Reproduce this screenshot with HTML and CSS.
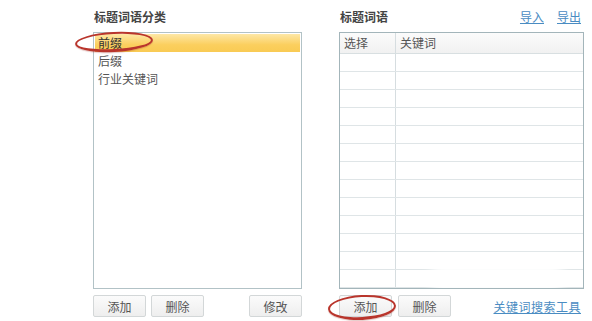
FILE: index.html
```html
<!DOCTYPE html>
<html lang="zh">
<head>
<meta charset="utf-8">
<link rel="stylesheet" href="styles.css">
</head>
<body>
<div class="page">
  <div class="col left">
    <div class="head"><span class="title">标题词语分类</span></div>
    <div class="listbox">
      <div class="item selected">前缀</div>
      <div class="item">后缀</div>
      <div class="item">行业关键词</div>
    </div>
    <div class="btnrow">
      <button class="btn">添加</button>
      <button class="btn">删除</button>
      <span class="spacer"></span>
      <button class="btn">修改</button>
    </div>
    <span class="mark mark-left"></span>
  </div>
  <div class="col right">
    <div class="head">
      <span class="title">标题词语</span>
      <span class="links"><a class="lnk">导入</a><a class="lnk">导出</a></span>
    </div>
    <div class="table">
      <div class="row hdr"><div class="c1">选择</div><div class="c2">关键词</div></div>
      <div class="row"><div class="c1"></div><div class="c2"></div></div>
      <div class="row"><div class="c1"></div><div class="c2"></div></div>
      <div class="row"><div class="c1"></div><div class="c2"></div></div>
      <div class="row"><div class="c1"></div><div class="c2"></div></div>
      <div class="row"><div class="c1"></div><div class="c2"></div></div>
      <div class="row"><div class="c1"></div><div class="c2"></div></div>
      <div class="row"><div class="c1"></div><div class="c2"></div></div>
      <div class="row"><div class="c1"></div><div class="c2"></div></div>
      <div class="row"><div class="c1"></div><div class="c2"></div></div>
      <div class="row"><div class="c1"></div><div class="c2"></div></div>
      <div class="row"><div class="c1"></div><div class="c2"></div></div>
      <div class="row"><div class="c1"></div><div class="c2"></div></div>
      <div class="row"><div class="c1"></div><div class="c2"></div></div>
      <span class="smudge"></span>
    </div>
    <div class="btnrow">
      <button class="btn">添加</button>
      <button class="btn">删除</button>
      <span class="spacer"></span>
      <a class="lnk tool">关键词搜索工具</a>
    </div>
    <span class="mark mark-right"></span>
  </div>
</div>
</body>
</html>
```

FILE: styles.css
```css
* { box-sizing: border-box; }
html, body {
  margin: 0;
  padding: 0;
  background: #fff;
}
body {
  width: 592px;
  height: 321px;
  overflow: hidden;
  font-family: "Noto Sans CJK SC", "Noto Sans", sans-serif;
  font-size: 12px;
  color: #444;
}
.page {
  display: flex;
  gap: 37px;
  padding-left: 93px;
}
.col {
  position: relative;
  display: flex;
  flex-direction: column;
}
.left { width: 209px; }
.right { width: 245px; }
.head {
  height: 32px;
  display: flex;
  align-items: center;
  justify-content: space-between;
  padding-top: 1px;
}
.title {
  font-weight: bold;
  font-size: 12px;
  color: #444;
  padding-left: 1px;
}
.links {
  display: flex;
  gap: 13px;
  padding-right: 3px;
}
.lnk {
  color: #4a8cc2;
  text-decoration: underline;
  font-size: 12px;
}
.listbox {
  height: 257px;
  border: 1px solid #b2c2c6;
  background: #fff;
  padding: 1px 1px;
}
.item {
  height: 18px;
  line-height: 18px;
  padding-left: 3px;
  color: #555;
}
.item.selected {
  background: linear-gradient(#fde7a6, #fbcf5e 60%, #f9cb54);
  color: #333;
}
.btnrow {
  display: flex;
  align-items: center;
  gap: 5px;
  margin-top: 6px;
  height: 22px;
}
.spacer { flex: 1; }
.btn {
  width: 53px;
  height: 22px;
  font-family: "Noto Sans CJK SC", "Noto Sans", sans-serif;
  font-size: 12px;
  color: #555;
  background: linear-gradient(#fbfbfb, #eeeeee);
  border: 1px solid #d3d7d8;
  border-radius: 2px;
  padding: 0;
}
.right .btnrow { gap: 6px; }
.tool {
  font-size: 12px;
  margin-right: 3px;
  letter-spacing: 0.5px;
}
.table {
  position: relative;
  height: 257px;
  border: 1px solid #a3b5ba;
  overflow: hidden;
  background: #fff;
}
.row {
  display: grid;
  grid-template-columns: 56px 1fr;
  height: 18px;
  border-bottom: 1px solid #dfe5e7;
}
.row.hdr {
  height: 21px;
  background: linear-gradient(#fbfbfb, #f1f1f1);
  border-bottom: 1px solid #d8dfe1;
}
.c1 {
  border-right: 1px solid #d6dde0;
  padding-left: 4px;
  line-height: 19px;
  color: #555;
}
.c2 {
  padding-left: 4px;
  line-height: 19px;
  color: #555;
}
.smudge {
  position: absolute;
  left: 92px;
  top: 226px;
  width: 130px;
  height: 40px;
  background: rgba(255, 255, 255, 0.92);
  filter: blur(6px);
}
.mark {
  position: absolute;
  border: 2px solid #b9352c;
  border-bottom-width: 3px;
  border-radius: 50%;
  box-shadow: 0 1px 1px rgba(150, 40, 30, 0.25);
}
.mark-left {
  left: -18px;
  top: 32px;
  width: 78px;
  height: 20px;
  transform: rotate(-3deg);
}
.mark-right {
  left: -11px;
  top: 295px;
  width: 68px;
  height: 25px;
  transform: rotate(-3deg);
}
```
